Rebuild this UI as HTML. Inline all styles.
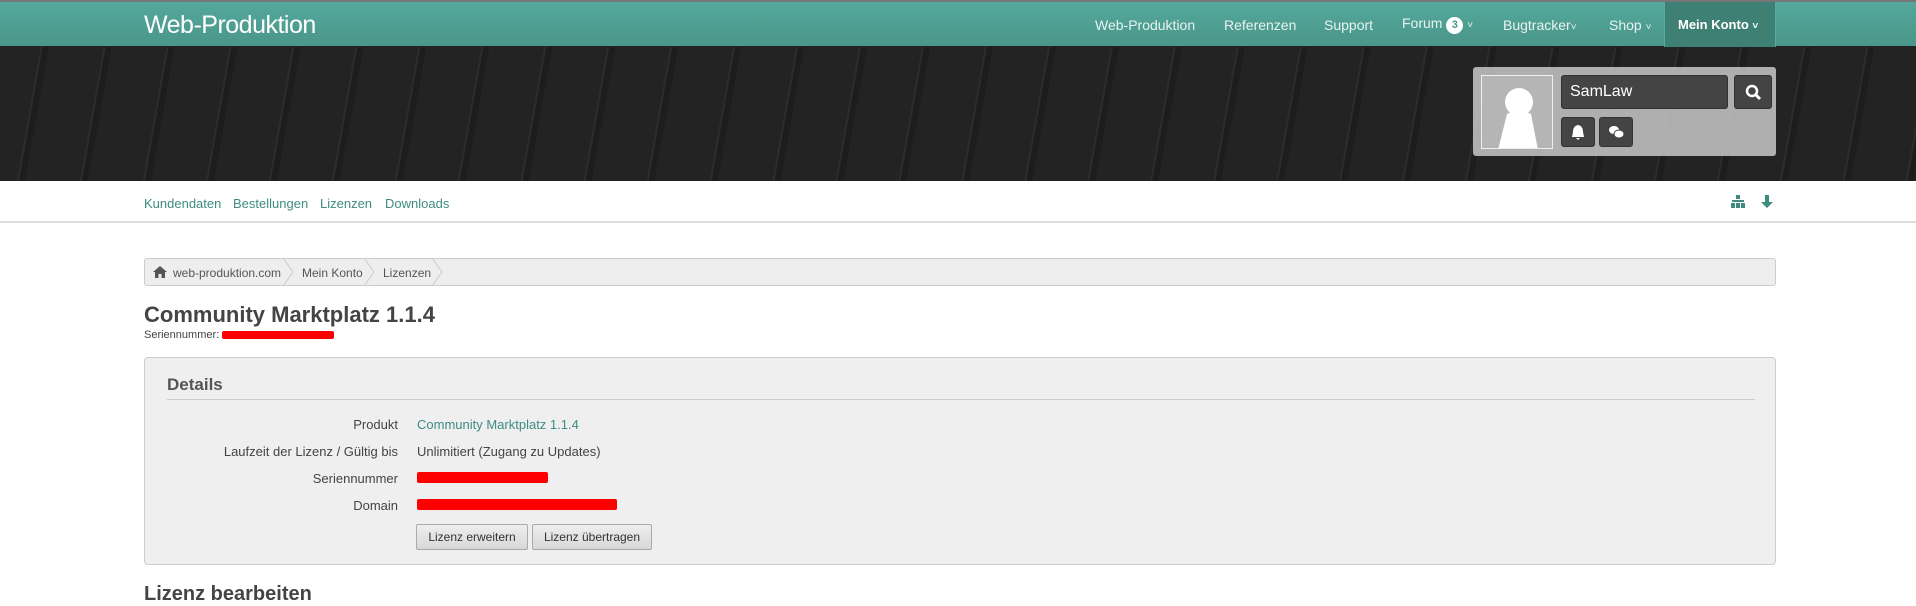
<!DOCTYPE html>
<html><head><meta charset="utf-8"><style>
*{box-sizing:border-box;margin:0;padding:0}
body{width:1916px;height:590px;overflow:hidden;background:#fff;font-family:"Liberation Sans",sans-serif;color:#333;position:relative}
.nav{position:absolute;left:0;top:0;width:1916px;height:47px;background:linear-gradient(#55a89c,#4a968a);border-top:2px solid #777;border-bottom:1px solid #222}
.logo{position:absolute;left:144px;top:9px;font-size:25px;color:#fff;letter-spacing:-0.5px}
.ni{position:absolute;top:15px;font-size:14px;color:#e8f3f1}
.ch{font-size:10px}
.mk{position:absolute;left:1664px;top:0;width:112px;height:45px;background:#3f8075;border-left:1px solid #5aa;border-right:1px solid #5aa}
.badge{display:inline-block;width:17px;height:17px;border-radius:50%;background:#fff;color:#4a968a;font-size:11px;text-align:center;line-height:17px;font-weight:bold}
.banner{position:absolute;left:0;top:47px;width:1916px;height:134px;background:
repeating-linear-gradient(100deg,rgba(255,255,255,0) 0 40px,rgba(255,255,255,.04) 40px 42px,rgba(0,0,0,.18) 42px 48px,rgba(255,255,255,0) 48px 62px),#232323}
.panel{position:absolute;left:1473px;top:67px;width:303px;height:89px;background:rgba(200,200,200,.85);border-radius:3px}
.av{position:absolute;left:8px;top:8px;width:72px;height:74px;background:#b5b5b5;border:1px solid #eee;overflow:hidden}
.un{position:absolute;left:88px;top:8px;width:167px;height:34px;background:#444;border-radius:3px;color:#fff;font-size:16px;padding:7px 8px;border:1px solid #333}
.sb{position:absolute;top:8px;left:261px;width:38px;height:34px;background:#444;border-radius:3px;border:1px solid #333}
.ib{position:absolute;top:50px;width:34px;height:30px;background:#444;border-radius:3px;border:1px solid #333}
.sub{position:absolute;left:0;top:181px;width:1916px;height:42px;border-bottom:2px solid #ddd}
.sub a{position:absolute;top:15px;font-size:13px;color:#3e8c80;text-decoration:none}
.bc{position:absolute;left:144px;top:258px;width:1632px;height:28px;background:#eee;border:1px solid #ccc;border-radius:3px;font-size:12px;color:#555}
.bc span{position:absolute;top:7px}
.chev{position:absolute;top:-1px;width:14px;height:28px}
h1{position:absolute;left:144px;top:302px;font-size:22px;font-weight:bold;color:#444}
.sn{position:absolute;left:144px;top:329px;font-size:11px;color:#444}
.red{position:absolute;background:#f00;border-radius:2px}
.box{position:absolute;left:144px;top:357px;width:1632px;height:208px;background:#efefef;border:1px solid #ccc;border-radius:4px}
.box h2{position:absolute;left:22px;top:17px;font-size:17px;color:#555;font-weight:bold}
.hr{position:absolute;left:22px;right:20px;top:41px;height:1px;background:#ccc}
.lb{position:absolute;right:1377px;font-size:13px;color:#444;text-align:right;white-space:nowrap}
.vl{position:absolute;left:272px;font-size:13px;color:#444;white-space:nowrap}
.btn{position:absolute;top:166px;height:26px;background:linear-gradient(#eee,#d8d8d8);border:1px solid #aaa;border-radius:2px;font-size:12px;color:#333;text-align:center;line-height:24px}
.lz{position:absolute;left:144px;top:583px;font-size:20px;font-weight:bold;color:#444}
</style></head><body>
<div class="nav">
<div class="logo">Web-Produktion</div>
<div class="ni" style="left:1095px">Web-Produktion</div>
<div class="ni" style="left:1224px">Referenzen</div>
<div class="ni" style="left:1324px">Support</div>
<div class="ni" style="left:1402px;top:13px">Forum <span class="badge">3</span> <span class="ch">˅</span></div>
<div class="ni" style="left:1503px">Bugtracker<span class="ch">˅</span></div>
<div class="ni" style="left:1609px">Shop <span class="ch">˅</span></div>
<div class="mk"><div class="ni" style="left:13px;color:#fff;font-weight:bold;font-size:13px;top:15px">Mein Konto <span class="ch">˅</span></div></div>
</div>
<div class="banner"></div>
<div class="panel">
<div class="av"><svg width="72" height="74"><circle cx="37" cy="26" r="14" fill="#fff"/><path d="M25 38 Q37 32 49 38 L56 74 L16 74 Z" fill="#fff"/></svg></div>
<div class="un">SamLaw</div>
<div class="sb"><svg width="36" height="32"><circle cx="17" cy="15" r="5" stroke="#fff" stroke-width="2.5" fill="none"/><line x1="21" y1="19" x2="25" y2="23" stroke="#fff" stroke-width="3"/></svg></div>
<div class="ib" style="left:88px"><svg width="32" height="28"><path d="M16 7 Q11 8 11 14 L10 19 L22 19 L21 14 Q21 8 16 7Z M14 20 L18 20 L16 22Z" fill="#fff"/></svg></div>
<div class="ib" style="left:126px"><svg width="32" height="28"><ellipse cx="14" cy="12" rx="5" ry="4" fill="#fff"/><ellipse cx="19" cy="16" rx="5" ry="4" fill="#fff" stroke="#444"/></svg></div>
</div>
<div class="sub">
<a style="left:144px">Kundendaten</a><a style="left:233px">Bestellungen</a><a style="left:320px">Lizenzen</a><a style="left:385px">Downloads</a>
<svg style="position:absolute;left:1731px;top:14px" width="14" height="14"><rect x="5" y="0" width="4" height="4" fill="#3e8c80"/><rect x="1" y="5" width="12" height="2" fill="#3e8c80"/><rect x="0" y="8" width="4" height="5" fill="#3e8c80"/><rect x="5" y="8" width="4" height="5" fill="#3e8c80"/><rect x="10" y="8" width="4" height="5" fill="#3e8c80"/></svg>
<svg style="position:absolute;left:1761px;top:14px" width="12" height="14"><path d="M4 0 H8 V7 H12 L6 13 L0 7 H4Z" fill="#3e8c80"/></svg>
</div>
<div class="bc">
<svg style="position:absolute;left:8px;top:7px" width="14" height="12"><path d="M7 0 L14 6 L12 6 L12 12 L8.5 12 L8.5 8 L5.5 8 L5.5 12 L2 12 L2 6 L0 6Z" fill="#555"/></svg>
<span style="left:28px">web-produktion.com</span>
<svg class="chev" style="left:138px"><path d="M0 0 L10 14 L0 28" stroke="#ccc" fill="none"/></svg>
<span style="left:157px">Mein Konto</span>
<svg class="chev" style="left:219px"><path d="M0 0 L10 14 L0 28" stroke="#ccc" fill="none"/></svg>
<span style="left:238px">Lizenzen</span>
<svg class="chev" style="left:287px"><path d="M0 0 L10 14 L0 28" stroke="#ccc" fill="none"/></svg>
</div>
<h1>Community Marktplatz 1.1.4</h1>
<div class="sn">Seriennummer:</div>
<div class="red" style="left:222px;top:331px;width:112px;height:8px"></div>
<div class="box">
<h2>Details</h2><div class="hr"></div>
<div class="lb" style="top:59px">Produkt</div><div class="vl" style="top:59px;color:#3e8c80">Community Marktplatz 1.1.4</div>
<div class="lb" style="top:86px">Laufzeit der Lizenz / Gültig bis</div><div class="vl" style="top:86px">Unlimitiert (Zugang zu Updates)</div>
<div class="lb" style="top:113px">Seriennummer</div><div class="red" style="left:272px;top:114px;width:131px;height:11px"></div>
<div class="lb" style="top:140px">Domain</div><div class="red" style="left:272px;top:141px;width:200px;height:11px"></div>
<div class="btn" style="left:271px;width:112px">Lizenz erweitern</div>
<div class="btn" style="left:387px;width:120px">Lizenz übertragen</div>
</div>
<div class="lz">Lizenz bearbeiten</div>
</body></html>
